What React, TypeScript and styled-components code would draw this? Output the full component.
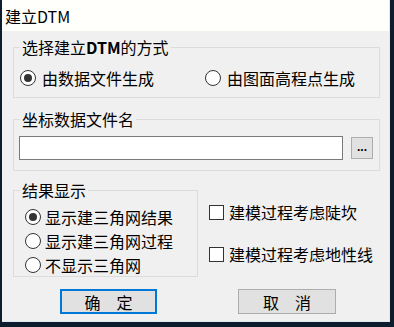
import React from "react";
import styled, { createGlobalStyle } from "styled-components";

const GlobalStyle = createGlobalStyle`
  html, body {
    margin: 0;
    padding: 0;
    overflow: hidden;
    background: #0e1d2d;
  }
  body {
    font-family: "Noto Sans CJK SC", "Noto Sans", sans-serif;
    font-size: 16px;
    color: #000;
  }
  * { box-sizing: border-box; }
`;

const Frame = styled.div`
  width: 394px;
  height: 327px;
  background: #0e1d2d;
  padding: 0 4px 5px 2px;
  display: flex;
`;

const Window = styled.div`
  flex: 1;
  display: flex;
  flex-direction: column;
  background: #f0f0f0;
  border-right: 1px solid #dfe9f2;
  border-bottom: 1px solid #dfe9f2;
`;

const TitleBar = styled.div`
  height: 31px;
  flex: none;
  background: #fffffc;
  display: flex;
  align-items: center;
  padding-left: 3px;
  font-size: 16px;
  line-height: 18px;
`;

const Body = styled.div`
  flex: 1;
  display: flex;
  flex-direction: column;
  padding: 7px 9px 0 11px;
`;

const Group = styled.fieldset<{ $width?: number; $mt?: number }>`
  margin: ${(p) => p.$mt ?? 0}px 0 0 0;
  padding: 0;
  min-width: 0;
  border: 1px solid #dcdcdc;
  border-radius: 0;
  ${(p) => (p.$width ? `width: ${p.$width}px; flex: none;` : "")}
`;

const Legend = styled.legend`
  margin-left: 6px;
  padding: 0 2px;
  font-size: 16px;
  line-height: 18px;
  height: 18px;
  b { font-weight: 700; }
`;

const RadioGrid = styled.div`
  display: grid;
  grid-template-columns: 185px auto;
  padding: 12px 0 9px 6px;
`;

const RadioList = styled.div`
  display: flex;
  flex-direction: column;
  gap: 4px;
  padding: 8px 0 1px 11px;
`;

const Option = styled.label<{ $gap: number }>`
  display: flex;
  align-items: center;
  gap: ${(p) => p.$gap}px;
  height: 20px;
  line-height: 20px;
  font-size: 16px;
  white-space: nowrap;
`;

const RadioCircle = styled.span<{ $checked?: boolean }>`
  width: 16px;
  height: 16px;
  flex: none;
  border-radius: 50%;
  border: 1px solid #333;
  background: #fff;
  display: flex;
  align-items: center;
  justify-content: center;
  &::after {
    content: "";
    width: 8px;
    height: 8px;
    border-radius: 50%;
    background: ${(p) => (p.$checked ? "#333" : "transparent")};
  }
`;

const CheckBox = styled.span`
  width: 15px;
  height: 15px;
  flex: none;
  border: 1px solid #333;
  background: #fff;
`;

const FileRow = styled.div`
  display: flex;
  align-items: center;
  gap: 8px;
  padding: 8px 6px 10px 5px;
`;

const TextInput = styled.div`
  flex: 1;
  height: 24px;
  background: #fff;
  border: 1px solid #7a7a7a;
`;

const BrowseButton = styled.div`
  width: 22px;
  height: 22px;
  flex: none;
  background: #e1e1e1;
  border: 1px solid #adadad;
  display: flex;
  align-items: center;
  justify-content: center;
  font-family: "Liberation Sans", Arial, sans-serif;
  font-weight: 700;
  font-size: 12px;
  line-height: 12px;
  padding-bottom: 2px;
  letter-spacing: 0px;
`;

const BottomRow = styled.div`
  display: flex;
  align-items: flex-start;
  margin-top: 10px;
`;

const CheckColumn = styled.div`
  display: flex;
  flex-direction: column;
  gap: 22px;
  padding: 21px 0 0 11px;
`;

const ButtonRow = styled.div`
  display: flex;
  gap: 81px;
  margin-top: 12px;
  padding-left: 47px;
`;

const DialogButton = styled.div<{ $primary?: boolean; $width: number }>`
  width: ${(p) => p.$width}px;
  height: 25px;
  background: #e1e1e1;
  border: ${(p) => (p.$primary ? "2px solid #0078d7" : "1px solid #adadad")};
  display: flex;
  align-items: center;
  justify-content: center;
  font-size: 16px;
  line-height: 18px;
`;

export default function App() {
  return (
    <>
      <GlobalStyle />
      <Frame>
        <Window>
          <TitleBar>建立DTM</TitleBar>
          <Body>
            <Group>
              <Legend>
                选择建立<b>DTM</b>的方式
              </Legend>
              <RadioGrid>
                <Option $gap={6}>
                  <RadioCircle $checked />
                  由数据文件生成
                </Option>
                <Option $gap={6}>
                  <RadioCircle />
                  由图面高程点生成
                </Option>
              </RadioGrid>
            </Group>

            <Group $mt={12}>
              <Legend>坐标数据文件名</Legend>
              <FileRow>
                <TextInput />
                <BrowseButton>...</BrowseButton>
              </FileRow>
            </Group>

            <BottomRow>
              <Group $width={185}>
                <Legend>结果显示</Legend>
                <RadioList>
                  <Option $gap={4}>
                    <RadioCircle $checked />
                    显示建三角网结果
                  </Option>
                  <Option $gap={4}>
                    <RadioCircle />
                    显示建三角网过程
                  </Option>
                  <Option $gap={4}>
                    <RadioCircle />
                    不显示三角网
                  </Option>
                </RadioList>
              </Group>
              <CheckColumn>
                <Option $gap={5}>
                  <CheckBox />
                  建模过程考虑陡坎
                </Option>
                <Option $gap={5}>
                  <CheckBox />
                  建模过程考虑地性线
                </Option>
              </CheckColumn>
            </BottomRow>

            <ButtonRow>
              <DialogButton $primary $width={97}>
                确　定
              </DialogButton>
              <DialogButton $width={98}>取　消</DialogButton>
            </ButtonRow>
          </Body>
        </Window>
      </Frame>
    </>
  );
}
